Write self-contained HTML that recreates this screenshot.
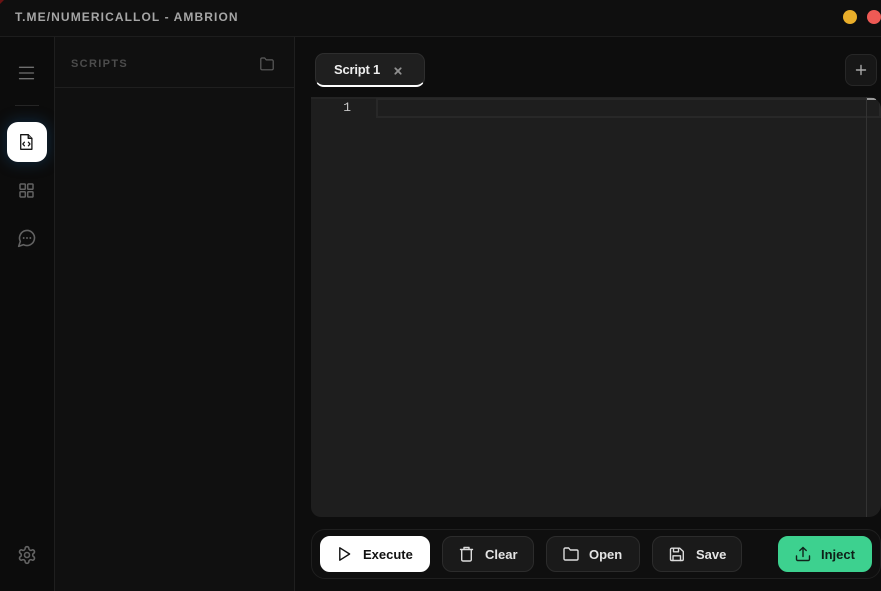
<!DOCTYPE html>
<html>
<head>
<meta charset="utf-8">
<style>
html,body{margin:0;padding:0;width:881px;height:591px;overflow:hidden;background:#0d0d0d;font-family:"Liberation Sans",sans-serif}
.a{position:absolute;box-sizing:border-box}
svg{position:absolute;fill:none;stroke-linecap:round;stroke-linejoin:round}
.btn{position:absolute;box-sizing:border-box;top:536px;height:36px;border-radius:10px;background:#1a1a1a;border:1px solid #2c2c2c;color:#e4e4e4;font-weight:700;font-size:13px;line-height:35px}
.btn span{position:absolute;top:0;white-space:nowrap}
</style>
</head>
<body>
<!-- titlebar -->
<div class="a" style="left:0;top:0;width:881px;height:37px;background:#0f0f0f;border-bottom:1px solid #1d1d1d"></div>
<div class="a" style="left:0;top:0;width:0;height:0;border-top:4px solid #6a1212;border-right:4px solid transparent"></div>
<div class="a" style="left:15px;top:9px;font-size:12px;line-height:16px;font-weight:700;letter-spacing:1.100px;color:#a6a6a6;white-space:nowrap">T.ME/NUMERICALLOL - AMBRION</div>
<div class="a" style="left:843px;top:10px;width:14px;height:14px;border-radius:50%;background:#e9ae2a"></div>
<div class="a" style="left:867px;top:10px;width:14px;height:14px;border-radius:50%;background:#ee5a55"></div>

<!-- rail -->
<div class="a" style="left:0;top:37px;width:55px;height:554px;background:#0c0c0c;border-right:1px solid #1f1f1f"></div>
<svg style="left:18px;top:65px" width="18" height="16" viewBox="0 0 18 16" stroke="#6f6f6f" stroke-width="1.300"><path d="M1.500 2.300h14M1.500 8h14M1.500 13.700h14"/></svg>
<div class="a" style="left:15px;top:105px;width:24px;height:1px;background:#262626"></div>
<div class="a" style="left:7px;top:122px;width:40px;height:40px;border-radius:11px;background:#fff;box-shadow:0 0 14px 2px rgba(20,80,130,.38)"></div>
<svg style="left:19px;top:133px" width="16" height="18" viewBox="0 0 16 18" stroke="#151515" stroke-width="1.300"><path d="M1.700 1.700h7.500l3.700 3.700v10.900H1.700z"/><path d="M9.200 1.700v3.700h3.700" fill="#888"/><path d="M5.400 9.200L3.800 11l1.600 1.800M9.400 9.200l1.600 1.800-1.600 1.800"/></svg>
<svg style="left:19px;top:183px" width="15" height="15" viewBox="0 0 15 15" stroke="#626262" stroke-width="1.500"><rect x="1" y="1" width="5.300" height="5.300" rx=".8"/><rect x="8.700" y="1" width="5.300" height="5.300" rx=".8"/><rect x="1" y="8.700" width="5.300" height="5.300" rx=".8"/><rect x="8.700" y="8.700" width="5.300" height="5.300" rx=".8"/></svg>
<svg style="left:16.500px;top:228px" width="20" height="20" viewBox="0 0 24 24" stroke="#626262" stroke-width="1.900"><path d="M7.900 20A9 9 0 1 0 4 16.100L2 22Z"/><path d="M8 12h.01M12 12h.01M16 12h.01" stroke-width="2.300"/></svg>
<svg style="left:16.500px;top:545px" width="20" height="20" viewBox="0 0 24 24" stroke="#636363" stroke-width="1.900"><path d="M12.220 2h-.44a2 2 0 0 0-2 2v.18a2 2 0 0 1-1 1.730l-.43.25a2 2 0 0 1-2 0l-.15-.08a2 2 0 0 0-2.730.73l-.22.38a2 2 0 0 0 .73 2.730l.15.1a2 2 0 0 1 1 1.720v.51a2 2 0 0 1-1 1.740l-.15.09a2 2 0 0 0-.73 2.730l.22.38a2 2 0 0 0 2.730.73l.15-.08a2 2 0 0 1 2 0l.43.25a2 2 0 0 1 1 1.730V20a2 2 0 0 0 2 2h.44a2 2 0 0 0 2-2v-.18a2 2 0 0 1 1-1.730l.43-.25a2 2 0 0 1 2 0l.15.08a2 2 0 0 0 2.730-.73l.22-.39a2 2 0 0 0-.73-2.730l-.15-.08a2 2 0 0 1-1-1.740v-.5a2 2 0 0 1 1-1.740l.15-.09a2 2 0 0 0 .73-2.730l-.22-.38a2 2 0 0 0-2.730-.73l-.15.08a2 2 0 0 1-2 0l-.43-.25a2 2 0 0 1-1-1.730V4a2 2 0 0 0-2-2z"/><circle cx="12" cy="12" r="3"/></svg>

<!-- scripts panel -->
<div class="a" style="left:55px;top:37px;width:240px;height:554px;background:#101010;border-right:1px solid #1f1f1f"></div>
<div class="a" style="left:55px;top:87px;width:239px;height:1px;background:#1f1f1f"></div>
<div class="a" style="left:71px;top:57px;font-size:11px;line-height:15px;font-weight:700;letter-spacing:1.350px;color:#4c4c4c">SCRIPTS</div>
<svg style="left:260px;top:57px" width="14" height="14" viewBox="0 0 14 14" stroke="#5c5c5c" stroke-width="1.200"><path d="M.8 2.200a1.200 1.200 0 0 1 1.200-1.200h2.700l1.500 1.900h5.800a1.200 1.200 0 0 1 1.200 1.200v7.500a1.200 1.200 0 0 1-1.200 1.200H2a1.200 1.200 0 0 1-1.200-1.200z"/></svg>

<!-- main -->
<div class="a" style="left:295px;top:37px;width:586px;height:554px;background:#0d0d0d"></div>
<!-- tab -->
<div class="a" style="left:315px;top:53px;width:110px;height:34px;border-radius:9px;background:#1f1f1f;border:1px solid #2e2e2e;border-bottom:2px solid #fff"></div>
<div class="a" style="left:334px;top:62px;font-size:13px;line-height:16px;font-weight:700;color:#eee;letter-spacing:-.2px">Script 1</div>
<svg style="left:393.500px;top:66.500px" width="8" height="8" viewBox="0 0 8 8" stroke="#909090" stroke-width="1.800"><path d="M1.300 1.300l5.400 5.400M6.700 1.300L1.300 6.700"/></svg>
<!-- plus -->
<div class="a" style="left:845px;top:54px;width:32px;height:32px;border-radius:8px;background:#171717;border:1px solid #272727"></div>
<svg style="left:855px;top:64px" width="12" height="12" viewBox="0 0 12 12" stroke="#a8a8a8" stroke-width="1.400"><path d="M6 1.500v9M1.500 6h9"/></svg>

<!-- editor -->
<div class="a" style="left:311px;top:97px;width:570px;height:420px;background:#1e1e1e;border-radius:0 12px 12px 10px;overflow:hidden">
  <div class="a" style="left:0;top:0;width:570px;height:2px;background:#242424"></div>
  <div class="a" style="left:65px;top:1px;width:505px;height:20px;border:2px solid #282828"></div>
  <div class="a" style="left:555px;top:0;width:1px;height:420px;background:#333"></div>
  <div class="a" style="left:556px;top:1px;width:9px;height:2px;background:#9a9a9a"></div>
  <div class="a" style="left:0;top:3px;width:40px;text-align:right;font-family:'Liberation Mono',monospace;font-size:13px;line-height:16px;color:#c8c8c8">1</div>
</div>

<!-- toolbar -->
<div class="a" style="left:311px;top:529px;width:570px;height:50px;border-radius:14px;background:#0f0f0f;border:1px solid #1f1f1f"></div>

<div class="btn" style="left:320px;width:110px;background:#fff;border-color:#fff;color:#111"><span style="left:42px">Execute</span></div>
<svg style="left:338px;top:546px" width="14" height="16" viewBox="0 0 14 16" stroke="#111" stroke-width="1.400"><path d="M1.800 1.800l9.800 6.200-9.800 6.200z"/></svg>

<div class="btn" style="left:442px;width:92px"><span style="left:42px">Clear</span></div>
<svg style="left:459px;top:546px" width="15" height="16" viewBox="0 0 15 16" stroke="#dcdcdc" stroke-width="1.400"><path d="M1.500 3.500h12M5 3.500V1.500h5v2M2.700 3.500v10.300a1.200 1.200 0 0 0 1.200 1.200h7.200a1.200 1.200 0 0 0 1.200-1.200V3.500"/></svg>

<div class="btn" style="left:546px;width:94px"><span style="left:42px">Open</span></div>
<svg style="left:563px;top:547px" width="16" height="14" viewBox="0 0 16 14" stroke="#dcdcdc" stroke-width="1.400"><path d="M1 2.300A1.300 1.300 0 0 1 2.300 1h3.400l1.600 2h6.400A1.300 1.300 0 0 1 15 4.300v7.400a1.300 1.300 0 0 1-1.300 1.300H2.300A1.300 1.300 0 0 1 1 11.700z"/></svg>

<div class="btn" style="left:652px;width:90px"><span style="left:43px">Save</span></div>
<svg style="left:669px;top:547px" width="16" height="15" viewBox="0 0 16 15" stroke="#dcdcdc" stroke-width="1.400"><path d="M1.500 2.500A1.300 1.300 0 0 1 2.800 1.200h8l3.500 3.300v7.700a1.300 1.300 0 0 1-1.300 1.300H2.800a1.300 1.300 0 0 1-1.300-1.300z"/><path d="M4.500 1.500v3.300h5V1.500M4 13.500V8.800h7.500v4.700"/></svg>

<div class="btn" style="left:778px;width:94px;background:#3dd18f;border-color:#3dd18f;color:#0f1f18"><span style="left:42px">Inject</span></div>
<svg style="left:795px;top:546px" width="16" height="16" viewBox="0 0 16 16" stroke="#10241b" stroke-width="1.400"><path d="M8 10.500V1.500M4.800 4.500L8 1.500l3.200 3M1.500 10v3.200a1.300 1.300 0 0 0 1.300 1.300h10.400a1.300 1.300 0 0 0 1.300-1.300V10"/></svg>
</body>
</html>
